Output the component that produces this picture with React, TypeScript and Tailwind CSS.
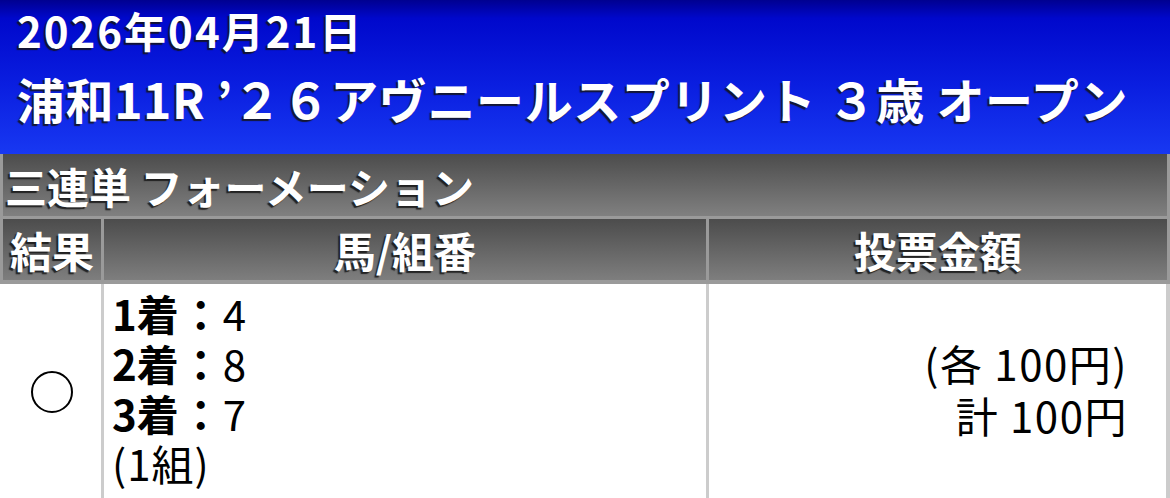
import React from "react";

const FONT = "font-['Noto_Sans_CJK_JP','Noto_Sans',sans-serif]";
const SHADOW = "[text-shadow:-2px_2px_1px_rgba(20,20,20,0.85)]";

const PICKS = [
  { place: "1着", horse: "4" },
  { place: "2着", horse: "8" },
  { place: "3着", horse: "7" },
];

export default function App() {
  return (
    <div className={`w-[1170px] h-[498px] overflow-hidden bg-white ${FONT}`}>
      {/* race header */}
      <header className="h-[154px] bg-[linear-gradient(to_bottom,#000090_0%,#0008cc_12%,#0a1ee0_55%,#1838f2_100%)] pl-[17px] text-white">
        <div className={`pt-[5px] text-[42px] font-bold leading-[50px] tracking-[2px] ${SHADOW}`}>2026年04月21日</div>
        <div className={`mt-[14px] text-[48px] font-bold leading-[58px] tracking-[0.6px] whitespace-nowrap ${SHADOW}`}>
          浦和11R ’２６アヴニールスプリント ３歳 オープン
        </div>
      </header>

      {/* bet table */}
      <div className="border-x-[3px] border-[#9a9a9a] bg-[#9a9a9a]">
        <div className={`h-[62px] flex items-center pl-[2px] bg-[linear-gradient(to_bottom,#4c4c4c,#808080)] text-white text-[42px] font-bold ${SHADOW}`}>
          三連単 フォーメーション
        </div>
        <div className="mt-[3px] grid grid-cols-[98px_602px_1fr] gap-x-[3px] pb-[4px]">
          {["結果", "馬/組番", "投票金額"].map((h) => (
            <div
              key={h}
              className={`h-[61px] flex items-center justify-center bg-[linear-gradient(to_bottom,#4c4c4c,#7e7e7e)] text-white text-[42px] font-bold ${SHADOW}`}
            >
              {h}
            </div>
          ))}
        </div>
      </div>

      <div className="grid grid-cols-[101px_3px_602px_3px_1fr_4px] text-black">
        <div className="flex items-center justify-center pl-[3px]">
          <div aria-label="○" className="w-[42px] h-[42px] rounded-full border-[2px] border-black" />
        </div>
        <div className="bg-[#cccccc]" />
        <div className="pl-[8px] pt-[4px] pb-[12px] text-[42px] leading-[50px]">
          {PICKS.map((p) => (
            <div key={p.place} className="flex">
              <span className="font-bold">{p.place}</span>
              <span className="font-bold w-[44px] text-center">：</span>
              <span className="tracking-[2px]">{p.horse}</span>
            </div>
          ))}
          <div className="tracking-[1px]">(1組)</div>
        </div>
        <div className="bg-[#cccccc]" />
        <div className="flex flex-col items-end justify-center pr-[38px] pb-[6px] text-[42px] leading-[52px] tracking-[1.5px] whitespace-pre">
          <div>(各 100円)</div>
          <div>計 100円</div>
        </div>
        <div className="bg-[#cccccc]" />
      </div>
    </div>
  );
}
